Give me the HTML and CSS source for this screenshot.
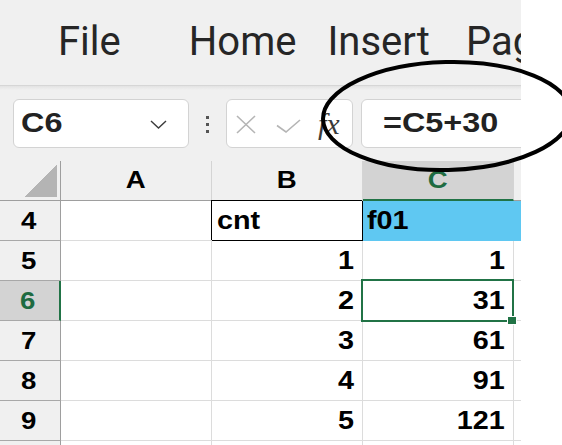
FILE: index.html
```html
<!DOCTYPE html>
<html>
<head>
<meta charset="utf-8">
<link rel="stylesheet" href="styles.css">
</head>
<body>
<div class="app">
  <div class="ribbon">
    <span class="tab tab-file">File</span>
    <span class="tab tab-home">Home</span>
    <span class="tab tab-insert">Insert</span>
    <span class="tab tab-page">Page Layout</span>
  </div>
  <div class="fbar">
    <div class="namebox">
      <span class="wide nb-text">C6</span>
      <svg class="chev" width="17" height="9" viewBox="0 0 17 9"><path d="M1 1 L8.5 8 L16 1" fill="none" stroke="#3c3c3c" stroke-width="1.4"/></svg>
    </div>
    <div class="dots"><i></i><i></i><i></i></div>
    <div class="fxbox">
      <svg class="ico-x" width="20" height="19" viewBox="0 0 20 19"><path d="M1 1 L19 18 M19 1 L1 18" fill="none" stroke="#b5b5b5" stroke-width="1.6"/></svg>
      <svg class="ico-check" width="25" height="14" viewBox="0 0 25 14"><path d="M1 6.5 L10 13 L24 1" fill="none" stroke="#b5b5b5" stroke-width="1.6"/></svg>
      <span class="fx">fx</span>
    </div>
    <div class="formula"><span class="wide f-text">=C5+30</span></div>
  </div>
  <div class="sheet">
    <div class="corner"><div class="tri"></div></div>
    <div class="ch"><span class="t">A</span></div>
    <div class="ch"><span class="t">B</span></div>
    <div class="ch ch-sel"><span class="t">C</span></div>
    <div class="ch ch-d"></div>

    <div class="rh"><span class="t">4</span></div>
    <div class="c"></div>
    <div class="c c-boxed"><span class="t tl">cnt</span></div>
    <div class="c c-blue"><span class="t tl">f01</span></div>
    <div class="c c-blue c-d"><span class="filter"></span></div>

    <div class="rh"><span class="t">5</span></div>
    <div class="c"></div>
    <div class="c num"><span class="t">1</span></div>
    <div class="c num"><span class="t">1</span></div>
    <div class="c c-d"></div>

    <div class="rh rh-sel"><span class="t">6</span></div>
    <div class="c"></div>
    <div class="c num"><span class="t">2</span></div>
    <div class="c num"><span class="t">31</span></div>
    <div class="c c-d"></div>

    <div class="rh"><span class="t">7</span></div>
    <div class="c"></div>
    <div class="c num"><span class="t">3</span></div>
    <div class="c num"><span class="t">61</span></div>
    <div class="c c-d"></div>

    <div class="rh"><span class="t">8</span></div>
    <div class="c"></div>
    <div class="c num"><span class="t">4</span></div>
    <div class="c num"><span class="t">91</span></div>
    <div class="c c-d"></div>

    <div class="rh"><span class="t">9</span></div>
    <div class="c"></div>
    <div class="c num"><span class="t">5</span></div>
    <div class="c num"><span class="t">121</span></div>
    <div class="c c-d"></div>

    <div class="rh"></div>
    <div class="c"></div>
    <div class="c"></div>
    <div class="c"></div>
    <div class="c c-d"></div>

    <div class="selection"></div>
    <div class="handle"></div>
  </div>
</div>
<svg class="mark" width="562" height="445" viewBox="0 0 562 445"><ellipse cx="447" cy="116" rx="124" ry="54" transform="rotate(-1.5 447 116)" fill="none" stroke="#000" stroke-width="4"/></svg>
</body>
</html>
```

FILE: styles.css
```css
html, body {
  margin: 0;
  padding: 0;
  background: #ffffff;
}

.app {
  width: 521px;
  height: 445px;
  overflow: hidden;
  background: #f0f0f0;
}

/* ribbon tabs */
.ribbon {
  height: 86px;
  box-sizing: border-box;
  padding: 22px 0 0 58px;
  display: flex;
  white-space: nowrap;
  overflow: hidden;
  border-bottom: 1px solid #d6d6d6;
  font-family: Roboto, "Noto Sans", sans-serif;
  font-size: 40px;
  line-height: 40px;
  color: #262626;
}
.tab { flex-shrink: 0; }
.tab-home { margin-left: 68px; }
.tab-insert { margin-left: 31px; }
.tab-page { margin-left: 36px; }

/* formula bar */
.fbar {
  height: 75px;
  box-sizing: border-box;
  padding-left: 13px;
  display: flex;
  align-items: center;
  background: linear-gradient(#e3e3e3, #f0f0f0 4px);
}
.namebox, .fxbox, .formula {
  height: 49px;
  box-sizing: border-box;
  background: #ffffff;
  border: 1px solid #d3d3d3;
  border-radius: 6px;
  display: flex;
  align-items: center;
  flex-shrink: 0;
}
.namebox {
  width: 176px;
  padding: 0 21px 0 7px;
  justify-content: space-between;
}
.wide {
  display: inline-block;
  font-family: "Liberation Sans", Arial, sans-serif;
  font-weight: 700;
  font-size: 27px;
  line-height: 1;
  color: #222222;
  transform: scaleX(1.2);
  transform-origin: left center;
}
.chev { margin-top: 2px; }

.dots {
  margin-left: 17px;
  display: flex;
  flex-direction: column;
  gap: 4px;
  margin-top: 2px;
}
.dots i {
  display: block;
  width: 3px;
  height: 3px;
  background: #555555;
}

.fxbox {
  margin-left: 17px;
  width: 127px;
  padding-left: 9px;
}
.ico-x { margin-top: 2px; }
.ico-check { margin-left: 20px; margin-top: 5px; }
.fx {
  margin-left: 17px;
  font-family: "Liberation Serif", "Times New Roman", serif;
  font-style: italic;
  font-size: 30px;
  line-height: 1;
  color: #3a3a3a;
}

.formula {
  margin-left: 8px;
  flex: 1;
  margin-right: -30px;
  padding-left: 21px;
}

/* sheet grid */
.sheet {
  position: relative;
  display: grid;
  grid-template-columns: 61px 151px 151px 151px 1fr;
  grid-auto-rows: 40px;
  background: #ffffff;
  font-family: "Liberation Sans", Arial, sans-serif;
  font-weight: 700;
  color: #000000;
}
.sheet > div {
  box-sizing: border-box;
}
.t {
  display: inline-block;
  transform: scaleX(1.15);
  transform-origin: center;
}

.corner {
  background: #f0f0f0;
  border-right: 1px solid #9e9e9e;
  border-bottom: 1px solid #9e9e9e;
  display: flex;
  justify-content: flex-end;
  align-items: flex-end;
  padding: 0 3px 3px 0;
}
.tri {
  width: 32px;
  height: 32px;
  background: linear-gradient(to bottom right, transparent 50%, #b4b4b4 50%);
}

.ch {
  background: #f0f0f0;
  border-right: 1px solid #d4d4d4;
  border-bottom: 1px solid #9e9e9e;
  text-align: center;
  font-size: 24px;
  line-height: 38px;
}
.ch-sel {
  background: #d3d3d3;
  color: #1e6b41;
  border-bottom: 2px solid #217346;
}
.ch-d { border-right: none; }

.rh {
  background: #f0f0f0;
  border-right: 1px solid #9e9e9e;
  border-bottom: 1px solid #a8a8a8;
  text-align: center;
  font-size: 24px;
  line-height: 39px;
  padding-right: 3px;
}
.rh-sel {
  background: #d3d3d3;
  color: #1e6b41;
  border-right: 2px solid #217346;
}

.c {
  border-right: 1px solid #dcdcdc;
  border-bottom: 1px solid #dcdcdc;
  font-size: 25px;
  line-height: 39px;
  padding: 0 8px 0 5px;
  white-space: nowrap;
}
.c-d { border-right: none; padding: 0; }
.num { text-align: right; }
.num .t { transform-origin: right center; }
.tl { transform-origin: left center; }

.c-boxed {
  border-right-color: #000000;
  border-bottom-color: #000000;
  box-shadow: -1px -1px 0 #000000;
}
.c-blue {
  background: #5fc8f2;
  border-right-color: #5fc8f2;
  border-bottom-color: #5fc8f2;
  padding-left: 4px;
}
.filter {
  display: block;
  width: 2px;
  height: 6px;
  margin: 14px 0 0 5px;
  background: #333333;
}

.selection {
  position: absolute;
  left: 361px;
  top: 118px;
  width: 153px;
  height: 43px;
  border: 2px solid #217346;
  pointer-events: none;
}
.handle {
  position: absolute;
  left: 508px;
  top: 156px;
  width: 8px;
  height: 7px;
  background: #217346;
  box-shadow: 0 0 0 1px #ffffff;
}

.mark {
  position: absolute;
  left: 0;
  top: 0;
  pointer-events: none;
}
```
